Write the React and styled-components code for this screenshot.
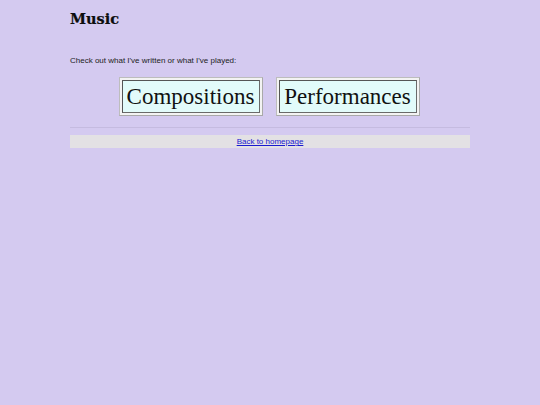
import React from "react";
import styled, { createGlobalStyle } from "styled-components";

const Global = createGlobalStyle`
  html, body {
    margin: 0;
    padding: 0;
    background: #d4caf0;
  }
  body {
    font-family: "Liberation Sans", Arial, sans-serif;
  }
`;

const Page = styled.main`
  width: 400px;
  margin: 0 auto;
  padding-top: 9px;
`;

const Title = styled.h1`
  margin: 0;
  font-family: "DejaVu Serif", Georgia, serif;
  font-weight: bold;
  font-size: 14.5px;
  line-height: 20px;
  color: #0d0d0d;
  -webkit-text-stroke: 0.2px #0d0d0d;
`;

const Intro = styled.p`
  margin: 27px 0 0;
  font-size: 8px;
  line-height: 10px;
  color: #222;
`;

const LinkRow = styled.div`
  display: flex;
  justify-content: center;
  gap: 13px;
  margin-top: 11px;
  padding-right: 2px;
`;

const Frame = styled.a`
  display: block;
  border: 1px solid #bdbdbd;
  border-right-color: #a9a9a9;
  border-bottom-color: #a9a9a9;
  background: #f3f3f3;
  padding: 2px;
  text-decoration: none;
`;

const Cell = styled.span`
  display: block;
  width: 138px;
  height: 33px;
  box-sizing: border-box;
  border: 1px solid #555;
  border-right-color: #6a6a6a;
  border-bottom-color: #6a6a6a;
  background: #e2fbfa;
  font-family: "Liberation Serif", "Times New Roman", serif;
  font-size: 23px;
  line-height: 31px;
  text-align: center;
  color: #111;
`;

const Rule = styled.hr`
  margin: 11px 0 0;
  border: none;
  border-top: 1px solid #c5bbe0;
  height: 0;
`;

const Footer = styled.footer`
  margin-top: 7px;
  background: #e3e1e4;
  height: 13px;
  display: flex;
  align-items: center;
  justify-content: center;
`;

const HomeLink = styled.a`
  font-size: 8px;
  color: #1a1ad0;
  text-decoration: underline;
`;

export default function App() {
  return (
    <>
      <Global />
      <Page>
        <Title>Music</Title>
        <Intro>Check out what I've written or what I've played:</Intro>
        <LinkRow>
          <Frame href="#compositions">
            <Cell>Compositions</Cell>
          </Frame>
          <Frame href="#performances">
            <Cell>Performances</Cell>
          </Frame>
        </LinkRow>
        <Rule />
        <Footer>
          <HomeLink href="#home">Back to homepage</HomeLink>
        </Footer>
      </Page>
    </>
  );
}
